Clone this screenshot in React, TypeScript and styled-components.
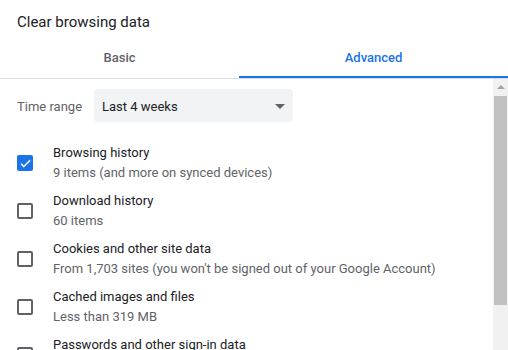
import styled, { createGlobalStyle } from "styled-components";

const GlobalStyle = createGlobalStyle`
  html, body {
    margin: 0;
    padding: 0;
    background: #fff;
  }
  body {
    font-family: Roboto, "Liberation Sans", Arial, sans-serif;
    color: #202124;
    -webkit-font-smoothing: antialiased;
  }
`;

const items = [
  { title: "Browsing history", desc: "9 items (and more on synced devices)", checked: true },
  { title: "Download history", desc: "60 items", checked: false },
  { title: "Cookies and other site data", desc: "From 1,703 sites (you won't be signed out of your Google Account)", checked: false },
  { title: "Cached images and files", desc: "Less than 319 MB", checked: false },
  { title: "Passwords and other sign-in data", desc: "None", checked: false },
];

export default function App() {
  return (
    <>
      <GlobalStyle />
      <Dialog>
        <Title>Clear browsing data</Title>
        <Tabs>
          <Tab $width={239}>Basic</Tab>
          <Tab $width={269} $active>
            Advanced
          </Tab>
        </Tabs>
        <Body>
          <Content>
            <RangeRow>
              <RangeLabel>Time range</RangeLabel>
              <Select>
                Last 4 weeks
                <Caret />
              </Select>
            </RangeRow>
            {items.map((it) => (
              <Row key={it.title}>
                <Box $checked={it.checked}>
                  {it.checked && (
                    <svg width="13" height="13" viewBox="0 0 24 24">
                      <path d="M9 16.2L4.8 12l-1.4 1.4L9 19 21 7l-1.4-1.4L9 16.2z" fill="#fff" stroke="#fff" strokeWidth="1" />
                    </svg>
                  )}
                </Box>
                <Texts>
                  <ItemTitle>{it.title}</ItemTitle>
                  <ItemDesc>{it.desc}</ItemDesc>
                </Texts>
              </Row>
            ))}
          </Content>
          <Scrollbar>
            <UpArrow />
            <Thumb />
          </Scrollbar>
        </Body>
      </Dialog>
    </>
  );
}

const Dialog = styled.div`
  width: 508px;
  height: 350px;
  overflow: hidden;
  display: flex;
  flex-direction: column;
`;

const Title = styled.div`
  height: 42px;
  line-height: 45px;
  padding-left: 17px;
  font-size: 15px;
  color: #202124;
`;

const Tabs = styled.div`
  display: flex;
  height: 36px;
  border-bottom: 1px solid #dadce0;
  flex-shrink: 0;
`;

const Tab = styled.div<{ $width: number; $active?: boolean }>`
  width: ${(p) => p.$width}px;
  box-sizing: border-box;
  display: flex;
  align-items: center;
  justify-content: center;
  font-size: 13px;
  font-weight: 500;
  padding-bottom: 4px;
  color: ${(p) => (p.$active ? "#1a73e8" : "#5f6368")};
  border-bottom: 2px solid ${(p) => (p.$active ? "#1a73e8" : "transparent")};
`;

const Body = styled.div`
  flex: 1;
  display: flex;
  min-height: 0;
`;

const Content = styled.div`
  flex: 1;
  overflow: hidden;
  padding: 10px 0 0 17px;
`;

const RangeRow = styled.div`
  display: flex;
  align-items: center;
  height: 33px;
  margin-bottom: 21px;
`;

const RangeLabel = styled.div`
  width: 77px;
  font-size: 13px;
  color: #5f6368;
  padding-top: 1px;
`;

const Select = styled.div`
  position: relative;
  width: 199px;
  height: 33px;
  box-sizing: border-box;
  padding: 1px 0 0 8px;
  display: flex;
  align-items: center;
  background: #f1f3f4;
  border-radius: 4px;
  font-size: 13px;
  color: #202124;
`;

const Caret = styled.span`
  position: absolute;
  right: 8px;
  top: 15px;
  width: 0;
  height: 0;
  border-left: 5px solid transparent;
  border-right: 5px solid transparent;
  border-top: 5px solid #5f6368;
`;

const Row = styled.div`
  display: flex;
  align-items: center;
  height: 40px;
  margin-bottom: 8px;
`;

const Box = styled.div<{ $checked: boolean }>`
  width: 16px;
  height: 16px;
  box-sizing: border-box;
  border-radius: 2px;
  flex-shrink: 0;
  display: flex;
  align-items: center;
  justify-content: center;
  margin-right: 20px;
  background: ${(p) => (p.$checked ? "#1a73e8" : "transparent")};
  border: ${(p) => (p.$checked ? "none" : "2px solid #5f6368")};
`;

const Texts = styled.div`
  display: flex;
  flex-direction: column;
`;

const ItemTitle = styled.div`
  font-size: 13px;
  line-height: 20px;
  color: #202124;
  white-space: nowrap;
`;

const ItemDesc = styled.div`
  font-size: 13px;
  line-height: 20px;
  color: #5f6368;
  white-space: nowrap;
`;

const Scrollbar = styled.div`
  width: 15px;
  background: #f1f1f1;
  position: relative;
  flex-shrink: 0;
`;

const UpArrow = styled.div`
  position: absolute;
  left: 4px;
  top: 6px;
  width: 0;
  height: 0;
  border-left: 4px solid transparent;
  border-right: 4px solid transparent;
  border-bottom: 4px solid #a3a3a3;
`;

const Thumb = styled.div`
  position: absolute;
  left: 1px;
  right: 1px;
  top: 17px;
  height: 209px;
  background: #c1c1c1;
`;
